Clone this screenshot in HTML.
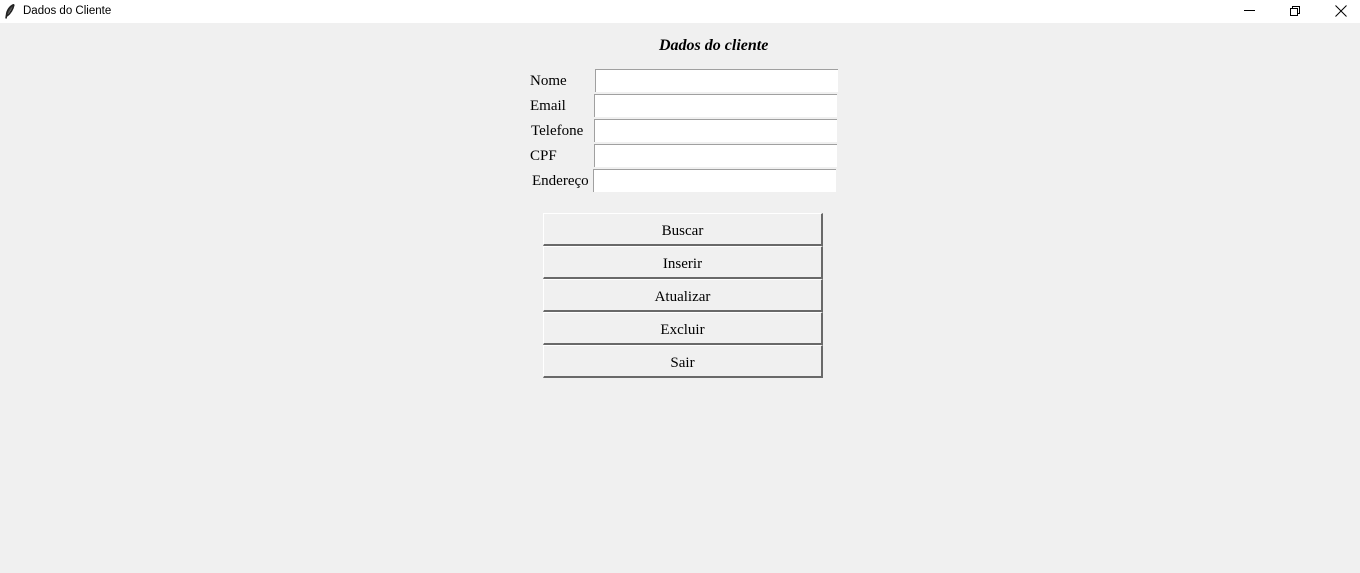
<!DOCTYPE html>
<html><head><meta charset="utf-8"><style>
body{margin:0;width:1360px;height:573px;background:#f0f0f0;position:relative;overflow:hidden;font-family:"Liberation Serif",serif;}
.tb{position:absolute;left:0;top:0;width:1360px;height:23px;background:#fff;}
.tt{position:absolute;left:23px;top:5px;font:11.5px "Liberation Sans",sans-serif;color:#000;}
.lbl{position:absolute;font-size:15px;color:#000;}
.ent{position:absolute;width:242px;height:22px;background:#fff;border-top:1px solid #a0a0a0;border-left:1px solid #a0a0a0;box-sizing:border-box;}
.btn{position:absolute;left:543px;width:280px;height:33px;box-sizing:border-box;background:#f0f0f0;border-top:1px solid #fff;border-left:1px solid #fff;border-right:2px solid #696969;border-bottom:2px solid #696969;text-align:center;line-height:34px;font-size:15px;}
</style></head><body>
<div class="tb">
<svg style="position:absolute;left:5px;top:4px" width="10" height="15" viewBox="0 0 10 15"><path d="M9 0.5C5 2 2 6 1.5 11L1 14.5M9 0.5C8 5 6 9 2 12" stroke="#222" stroke-width="1.6" fill="#444"/></svg>
<div class="tt">Dados do Cliente</div>
<svg style="position:absolute;left:1244px;top:10px" width="11" height="2"><rect width="11" height="1" fill="#000"/></svg>
<svg style="position:absolute;left:1289px;top:5px" width="12" height="12" viewBox="0 0 12 12"><rect x="1.5" y="3.5" width="7" height="7" fill="none" stroke="#000"/><path d="M3.5 3.5V1.5H10.5V8.5H8.5" fill="none" stroke="#000"/></svg>
<svg style="position:absolute;left:1335px;top:5px" width="12" height="12" viewBox="0 0 12 12"><path d="M0.5 0.5L11.5 11.5M11.5 0.5L0.5 11.5" stroke="#000"/></svg>
</div>
<div style="position:absolute;left:659px;top:37px;font-size:16px;font-weight:bold;font-style:italic">Dados do cliente</div>
<div class="lbl" style="left:530px;top:73px">Nome</div>
<div class="lbl" style="left:530px;top:98px">Email</div>
<div class="lbl" style="left:531px;top:123px">Telefone</div>
<div class="lbl" style="left:530px;top:148px">CPF</div>
<div class="lbl" style="left:532px;top:173px">Endereço</div>
<div class="ent" style="left:595px;top:69px;width:243px;height:23px"></div>
<div class="ent" style="left:594px;top:94px;width:243px;height:23px"></div>
<div class="ent" style="left:594px;top:119px;width:243px;height:23px"></div>
<div class="ent" style="left:594px;top:144px;width:243px;height:23px"></div>
<div class="ent" style="left:593px;top:169px;width:243px;height:23px"></div>
<div class="btn" style="top:213px">Buscar</div>
<div class="btn" style="top:246px">Inserir</div>
<div class="btn" style="top:279px">Atualizar</div>
<div class="btn" style="top:312px">Excluir</div>
<div class="btn" style="top:345px">Sair</div>
</body></html>
